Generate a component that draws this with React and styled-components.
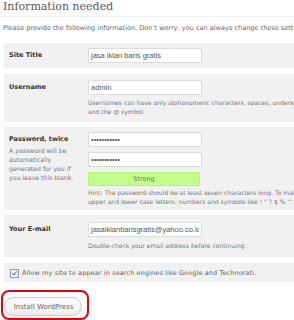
import React from 'react';
import styled, { createGlobalStyle } from 'styled-components';

const Global = createGlobalStyle`
  html, body { margin: 0; padding: 0; background: #fff; overflow: hidden; }
  body { width: 294px; height: 320px; }
`;

const Page = styled.div`
  width: 640px;
  font-family: "DejaVu Sans", Verdana, sans-serif;
  color: #555;
`;

const Title = styled.h1`
  margin: 0;
  padding: 0 0 0 3px;
  height: 16px;
  font-family: "DejaVu Serif", Georgia, serif;
  font-weight: normal;
  font-size: 11px;
  line-height: 13px;
  color: #5a5a5a;
  border-bottom: 1px solid #ececec;
`;

const Intro = styled.p`
  margin: 7px 0 11px 3px;
  font-size: 6.55px;
  line-height: 8px;
  white-space: nowrap;
  color: #666;
`;

const Form = styled.div`
  display: flex;
  flex-direction: column;
`;

const Row = styled.div`
  margin: 0 0 ${p => p.$gap}px 4px;
  background: #f1f1f1;
  display: grid;
  grid-template-columns: 79px 1fr;
  padding: ${p => p.$pad};
`;

const LabelCol = styled.div`
  display: flex;
  flex-direction: column;
`;

const Label = styled.div`
  font-weight: bold;
  font-size: 6.5px;
  line-height: 15px;
  color: #333;
  white-space: nowrap;
`;

const LabelNote = styled.div`
  font-size: 6.2px;
  line-height: 9px;
  color: #777;
  margin-top: -1px;
`;

const FieldCol = styled.div`
  display: flex;
  flex-direction: column;
  gap: ${p => p.$gap || 0}px;
`;

const Input = styled.input`
  display: block;
  box-sizing: border-box;
  width: 114px;
  height: 15px;
  margin: 0;
  padding: 0 2px;
  border: 1px solid #dcdcdc;
  background: #fff;
  font-family: "Liberation Sans", Arial, sans-serif;
  font-size: 7.5px;
  color: #555;
  outline: none;
`;

const Strength = styled.div`
  box-sizing: border-box;
  width: 112px;
  height: 14px;
  background: #c3ff88;
  border: 1px solid #b4f27a;
  font-size: 6.5px;
  line-height: 12px;
  text-align: center;
  color: #6a7a5a;
`;

const Hint = styled.div`
  margin-top: ${p => p.$top}px;
  font-size: 6.05px;
  line-height: 9px;
  color: #777;
  white-space: nowrap;
`;

const CheckRow = styled.label`
  margin: 0 0 8px 4px;
  background: #f1f1f1;
  display: flex;
  align-items: center;
  gap: 3px;
  padding: 5px 0 4px 6px;
  font-size: 6.4px;
  letter-spacing: 0.17px;
  line-height: 10px;
  color: #666;
  white-space: nowrap;
`;

const Box = styled.svg`
  flex: none;
  display: block;
`;

const Annotation = styled.div`
  display: inline-block;
  margin-left: 1px;
  padding: 5px 5px 2px 1px;
  border: 2px solid #e4000f;
  border-radius: 8px;
`;

const Button = styled.button`
  display: block;
  box-sizing: border-box;
  width: 78px;
  height: 19px;
  margin: 0;
  padding: 0 0 0 1px;
  border: 1px solid #c8c8c8;
  border-radius: 10px;
  background: linear-gradient(#ffffff, #ededed);
  font-family: "DejaVu Sans", Verdana, sans-serif;
  font-size: 7px;
  color: #666;
`;

function CheckIcon() {
  return (
    <Box width="9" height="9" viewBox="0 0 9 9">
      <rect x="0.5" y="0.5" width="8" height="8" fill="#eef0f6" stroke="#9a9aaa" />
      <path d="M2.3 4.4 L3.8 6 L6.8 2.4" fill="none" stroke="#3552c0" strokeWidth="1" />
    </Box>
  );
}

export default function App() {
  return (
    <>
      <Global />
      <Page>
        <Title>Information needed</Title>
        <Intro>Please provide the following information. Don’t worry, you can always change these settings later.</Intro>
        <Form>
          <Row $gap={6} $pad="5px 0 5px 5px">
            <Label>Site Title</Label>
            <FieldCol>
              <Input readOnly value="jasa iklan baris gratis" />
            </FieldCol>
          </Row>
          <Row $gap={5} $pad="6px 0 6px 5px">
            <Label>Username</Label>
            <FieldCol>
              <Input readOnly value="admin" />
              <Hint $top={3}>
                Usernames can have only alphanumeric characters, spaces, underscores, hyphens, periods
                <br />
                and the @ symbol.
              </Hint>
            </FieldCol>
          </Row>
          <Row $gap={5} $pad="5px 0 4px 5px">
            <LabelCol>
              <Label>Password, twice</Label>
              <LabelNote>
                A password will be<br />automatically<br />generated for you if<br />you leave this blank.
              </LabelNote>
            </LabelCol>
            <FieldCol $gap={5}>
              <Input readOnly type="password" value="12345678901" />
              <Input readOnly type="password" value="12345678901" />
              <Strength>Strong</Strength>
              <Hint $top={-3}>
                Hint: The password should be at least seven characters long. To make it stronger, use
                <br />
                upper and lower case letters, numbers and symbols like ! " ? $ % ^ &amp; ).
              </Hint>
            </FieldCol>
          </Row>
          <Row $gap={6} $pad="7px 0 7px 5px">
            <Label>Your E-mail</Label>
            <FieldCol>
              <Input readOnly value="jasaiklanbarisgratis@yahoo.co.id" />
              <Hint $top={4}>Double-check your email address before continuing.</Hint>
            </FieldCol>
          </Row>
          <CheckRow>
            <CheckIcon />
            Allow my site to appear in search engines like Google and Technorati.
          </CheckRow>
        </Form>
        <Annotation>
          <Button>Install WordPress</Button>
        </Annotation>
      </Page>
    </>
  );
}
